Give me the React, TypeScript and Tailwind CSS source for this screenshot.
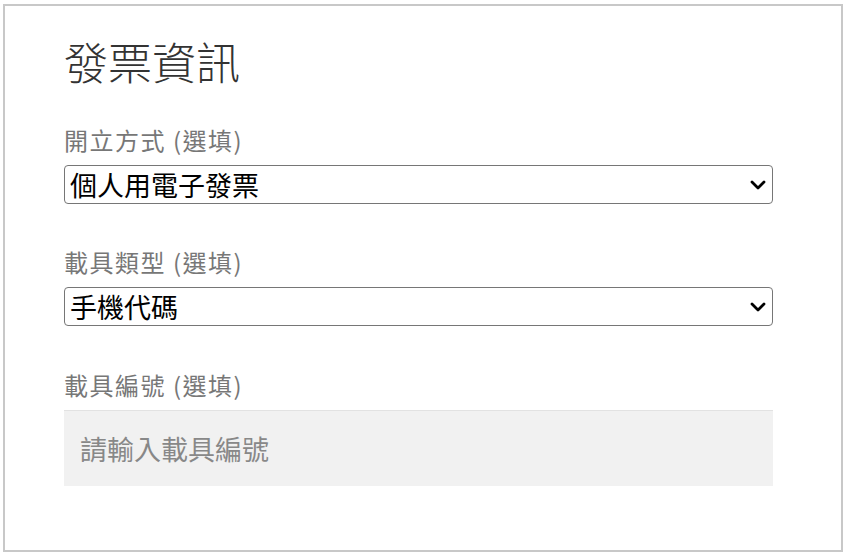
import React from "react";

const font = { fontFamily: '"Noto Sans CJK TC", "Noto Sans", sans-serif' };

function Chevron() {
  return (
    <svg width="16" height="12" viewBox="0 0 16 12" className="absolute right-[7px] top-1/2 -translate-y-1/2 pointer-events-none">
      <path d="M2 3 L8 9 L14 3" fill="none" stroke="#000" strokeWidth="2.8" strokeLinecap="round" strokeLinejoin="round" />
    </svg>
  );
}

function SelectField({ label, value }: { label: string; value: string }) {
  return (
    <div className="flex flex-col">
      <label className="text-[24px] leading-[28px] tracking-[1.5px] text-[#777] mb-[11px]">{label}</label>
      <div className="relative w-[709px] h-[39px]">
        <select
          defaultValue={value}
          className="appearance-none w-full h-full border border-[#767676] rounded-[4px] bg-white pl-[5px] pr-[30px] text-[27px] leading-[37px] text-black outline-none"
          style={font}
        >
          <option>{value}</option>
        </select>
        <Chevron />
      </div>
    </div>
  );
}

export default function App() {
  return (
    <div className="pt-[4px] pl-[3px] bg-white" style={font}>
      <div className="w-[840px] h-[548px] border-2 border-[#c8c8c8] pl-[59px] pt-[29px] flex flex-col">
        <h2 className="text-[44px] leading-[52px] font-light text-[#333] mb-[39px]">發票資訊</h2>
        <SelectField label="開立方式 (選填)" value="個人用電子發票" />
        <div className="h-[44px]" />
        <SelectField label="載具類型 (選填)" value="手機代碼" />
        <div className="h-[45px]" />
        <div className="flex flex-col">
          <label className="text-[24px] leading-[28px] tracking-[1.5px] text-[#777] mb-[11px]">載具編號 (選填)</label>
          <input
            placeholder="請輸入載具編號"
            className="w-[709px] h-[76px] bg-[#f1f1f1] border-t border-[#e2e2e2] px-[16px] text-[27px] text-[#333] placeholder:text-[#888] outline-none"
            style={font}
          />
        </div>
      </div>
    </div>
  );
}
